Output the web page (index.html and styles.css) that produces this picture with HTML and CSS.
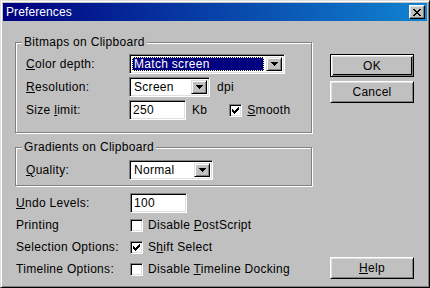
FILE: index.html
```html
<!DOCTYPE html>
<html>
<head>
<meta charset="utf-8">
<title>Preferences</title>
<link rel="stylesheet" href="styles.css">
</head>
<body>
<div class="window">
  <div class="titlebar">
    <span class="title">Preferences</span>
    <div class="close">
      <svg width="8" height="7" viewBox="0 0 8 7" shape-rendering="crispEdges"><path fill="#000" d="M0 0h2v1H0zM6 0h2v1H6zM1 1h2v1H1zM5 1h2v1H5zM2 2h4v1H2zM3 3h2v1H3zM2 4h4v1H2zM1 5h2v1H1zM5 5h2v1H5zM0 6h2v1H0zM6 6h2v1H6z"/></svg>
    </div>
  </div>
  <div class="client">
    <div class="main">
      <div class="group g1">
        <div class="legend">Bitmaps on Clipboard</div>
        <div class="grid">
          <span class="label"><u>C</u>olor depth:</span>
          <div class="combo c-wide">
            <span class="val"><span class="sel">Match screen</span></span>
            <span class="arrow"><svg width="7" height="4" viewBox="0 0 7 4" shape-rendering="crispEdges"><path fill="#000" d="M0 0h7v1H0zM1 1h5v1H1zM2 2h3v1H2zM3 3h1v1H3z"/></svg></span>
          </div>
          <span class="label"><u>R</u>esolution:</span>
          <div class="line">
            <div class="combo c-res">
              <span class="val">Screen</span>
              <span class="arrow"><svg width="7" height="4" viewBox="0 0 7 4" shape-rendering="crispEdges"><path fill="#000" d="M0 0h7v1H0zM1 1h5v1H1zM2 2h3v1H2zM3 3h1v1H3z"/></svg></span>
            </div>
            <span class="unit">dpi</span>
          </div>
          <span class="label">Size <u>l</u>imit:</span>
          <div class="line">
            <div class="edit">250</div>
            <span class="unit kb">Kb</span>
            <div class="check">
              <span class="box"><svg width="7" height="7" viewBox="0 0 7 7" shape-rendering="crispEdges"><path fill="#000" d="M0 2h1v3H0zM1 3h1v3H1zM2 4h1v3H2zM3 3h1v3H3zM4 2h1v3H4zM5 1h1v3H5zM6 0h1v3H6z"/></svg></span>
              <span><u>S</u>mooth</span>
            </div>
          </div>
        </div>
      </div>

      <div class="group g2">
        <div class="legend">Gradients on Clipboard</div>
        <div class="grid">
          <span class="label"><u>Q</u>uality:</span>
          <div class="combo c-q">
            <span class="val">Normal</span>
            <span class="arrow"><svg width="7" height="4" viewBox="0 0 7 4" shape-rendering="crispEdges"><path fill="#000" d="M0 0h7v1H0zM1 1h5v1H1zM2 2h3v1H2zM3 3h1v1H3z"/></svg></span>
          </div>
        </div>
      </div>

      <div class="opts">
        <span class="label"><u>U</u>ndo Levels:</span>
        <div class="edit">100</div>
        <span class="label">Printing</span>
        <div class="check">
          <span class="box"></span>
          <span>Disable <u>P</u>ostScript</span>
        </div>
        <span class="label">Selection Options:</span>
        <div class="check">
          <span class="box"><svg width="7" height="7" viewBox="0 0 7 7" shape-rendering="crispEdges"><path fill="#000" d="M0 2h1v3H0zM1 3h1v3H1zM2 4h1v3H2zM3 3h1v3H3zM4 2h1v3H4zM5 1h1v3H5zM6 0h1v3H6z"/></svg></span>
          <span>S<u>h</u>ift Select</span>
        </div>
        <span class="label">Timeline Options:</span>
        <div class="check">
          <span class="box"></span>
          <span>Disable <u>T</u>imeline Docking</span>
        </div>
      </div>
    </div>

    <div class="side">
      <div class="btn default"><span>OK</span></div>
      <div class="btn">Cancel</div>
      <div class="btn help"><span><u>H</u>elp</span></div>
    </div>
  </div>
</div>
</body>
</html>
```

FILE: styles.css
```css
* { box-sizing: border-box; }
html, body { margin: 0; padding: 0; background: #c0c0c0; }
body {
  font-family: "Liberation Sans", Arial, sans-serif;
  font-size: 12px;
  letter-spacing: 0.3px;
  color: #000;
  line-height: 14px;
}
u { text-underline-offset: 1px; }

.window {
  width: 430px;
  height: 288px;
  border: 1px solid;
  border-color: #dfdfdf #000 #000 #dfdfdf;
  box-shadow: inset 1px 1px #fff, inset -1px -1px #808080;
  padding: 2px;
  display: flex;
  flex-direction: column;
  background: #c0c0c0;
}

.titlebar {
  height: 18px;
  flex: none;
  background: linear-gradient(to right, #000080, #1084d0);
  display: flex;
  align-items: center;
  justify-content: space-between;
  padding: 0 2px 0 3px;
  color: #fff;
}
.title { letter-spacing: 0.1px; }
.close {
  width: 16px;
  height: 14px;
  background: #c0c0c0;
  border: 1px solid;
  border-color: #fff #000 #000 #fff;
  box-shadow: inset -1px -1px #808080, inset 1px 1px #dfdfdf;
  display: flex;
  align-items: center;
  justify-content: center;
}
.close svg { display: block; }

.client {
  flex: 1;
  display: flex;
  padding: 21px 0 0 12px;
}
.main {
  width: 298px;
  display: flex;
  flex-direction: column;
}

.group {
  position: relative;
  width: 297px;
  border: 1px solid #808080;
  box-shadow: inset 1px 1px #fff, 1px 1px #fff;
}
.legend {
  position: absolute;
  top: -8px;
  left: 6px;
  padding: 0 2px;
  background: #c0c0c0;
}
.g1 { height: 91px; padding: 11px 0 0 10px; }
.g2 { height: 39px; margin-top: 14px; padding: 12px 0 0 10px; }

.grid {
  display: grid;
  grid-template-columns: 103px auto;
  row-gap: 3px;
  align-items: center;
}
.line { display: flex; align-items: center; }
.unit { margin-left: 7px; }
.kb { margin-left: 6px; }

.combo {
  display: flex;
  height: 20px;
  padding: 2px;
  background: #fff;
  border: 1px solid;
  border-color: #808080 #fff #fff #808080;
  box-shadow: inset 1px 1px #000, inset -1px -1px #dfdfdf;
}
.c-wide { width: 156px; }
.c-res { width: 81px; }
.c-q { width: 84px; }
.val {
  flex: 1;
  display: flex;
  align-items: center;
  padding-left: 2px;
  padding-right: 1px;
}
.c-wide .val { padding: 0 2px 0 0; }
.sel {
  flex: 1;
  height: 100%;
  display: flex;
  align-items: center;
  padding-left: 2px;
  background: #000080;
  color: #fff;
  outline: 1px dotted #ffff90;
  outline-offset: -1px;
}
.arrow {
  width: 16px;
  flex: none;
  background: #c0c0c0;
  border: 1px solid;
  border-color: #dfdfdf #000 #000 #dfdfdf;
  box-shadow: inset 1px 1px #fff, inset -1px -1px #808080;
  display: flex;
  align-items: center;
  justify-content: center;
}
.arrow svg { display: block; }

.edit {
  width: 57px;
  height: 20px;
  padding: 2px 0 0 3px;
  background: #fff;
  border: 1px solid;
  border-color: #808080 #fff #fff #808080;
  box-shadow: inset 1px 1px #000, inset -1px -1px #dfdfdf;
}

.check { display: flex; align-items: center; }
.line .check { margin-left: 22px; }
.box {
  width: 13px;
  height: 13px;
  flex: none;
  margin-right: 5px;
  background: #fff;
  border: 1px solid;
  border-color: #808080 #fff #fff #808080;
  box-shadow: inset 1px 1px #000, inset -1px -1px #dfdfdf;
  display: flex;
  align-items: center;
  justify-content: center;
}
.box svg { display: block; }

.opts {
  display: grid;
  grid-template-columns: 114px auto;
  grid-auto-rows: 22px;
  align-items: center;
  margin-top: 6px;
  padding-left: 1px;
}

.side {
  display: flex;
  flex-direction: column;
  padding: 12px 0 6px 17px;
}
.btn {
  width: 84px;
  height: 22px;
  display: flex;
  align-items: center;
  justify-content: center;
  background: #c0c0c0;
  border: 1px solid;
  border-color: #fff #000 #000 #fff;
  box-shadow: inset 1px 1px #dfdfdf, inset -1px -1px #808080;
  margin-bottom: 4px;
}
.btn.default {
  height: 23px;
  border: 1px solid #000;
  box-shadow: inset 1px 1px #fff, inset -1px -1px #808080, inset 2px 2px #dfdfdf, inset -2px -2px #000;
}
.btn.help { margin-top: auto; margin-bottom: 0; }
```
